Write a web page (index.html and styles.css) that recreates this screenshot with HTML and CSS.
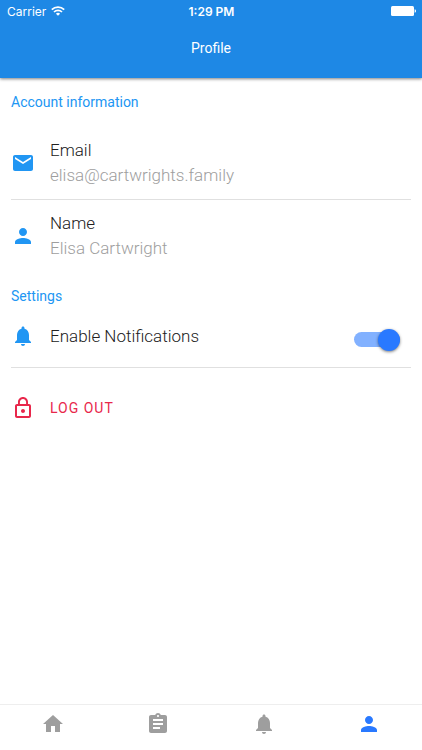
FILE: index.html
```html
<!DOCTYPE html>
<html lang="en">
<head>
  <meta charset="UTF-8">
  <meta name="viewport" content="width=device-width, initial-scale=1">
  <title>Profile</title>
  <link rel="stylesheet" href="styles.css">
</head>
<body>
  <header class="header">
    <div class="status">
      <div class="carrier">
        <span>Carrier</span>
        <svg width="14" height="10" viewBox="0 0 14 10" fill="none" stroke="#fff" stroke-width="1.7">
          <path d="M.8 3.7a8.8 8.8 0 0 1 12.4 0M3 6a5.7 5.7 0 0 1 8 0"/>
          <path d="M7 9.8 4.9 7.7a3 3 0 0 1 4.2 0z" fill="#fff" stroke="none"/>
        </svg>
      </div>
      <time>1:29 PM</time>
      <svg class="battery" width="25" height="10" viewBox="0 0 25 10" fill="#fff">
        <rect width="23" height="10" rx="1.5"/>
        <path d="M23.6 3.2c1.2.2 1.4 1 1.4 1.8s-.2 1.6-1.4 1.8z"/>
      </svg>
    </div>
    <h1>Profile</h1>
  </header>

  <main>
    <section>
      <h2>Account information</h2>
      <div class="row">
        <svg class="icon" viewBox="0 0 24 24"><path d="M20 4H4c-1.1 0-1.99.9-1.99 2L2 18c0 1.1.9 2 2 2h16c1.1 0 2-.9 2-2V6c0-1.1-.9-2-2-2zm0 4l-8 5-8-5V6l8 5 8-5v2z"/></svg>
        <div class="text">
          <p>Email</p>
          <p class="value">elisa@cartwrights.family</p>
        </div>
      </div>
      <div class="row">
        <svg class="icon" viewBox="0 0 24 24"><path d="M12 12c2.21 0 4-1.79 4-4s-1.79-4-4-4-4 1.79-4 4 1.79 4 4 4zm0 2c-2.67 0-8 1.34-8 4v2h16v-2c0-2.66-5.33-4-8-4z"/></svg>
        <div class="text">
          <p>Name</p>
          <p class="value">Elisa Cartwright</p>
        </div>
      </div>
    </section>

    <section>
      <h2>Settings</h2>
      <div class="row setting">
        <svg class="icon" viewBox="0 0 24 24"><path d="M12 22c1.1 0 2-.9 2-2h-4c0 1.1.89 2 2 2zm6-6v-5c0-3.07-1.64-5.64-4.5-6.32V4c0-.83-.67-1.5-1.5-1.5s-1.5.67-1.5 1.5v.68C7.63 5.36 6 7.92 6 11v5l-2 2v1h16v-1l-2-2z"/></svg>
        <label class="text" for="notifications">Enable Notifications</label>
        <input class="switch" type="checkbox" role="switch" id="notifications" checked>
      </div>
    </section>

    <button class="logout" type="button">
      <svg class="icon" viewBox="0 0 24 24"><path d="M12 17c1.1 0 2-.9 2-2s-.9-2-2-2-2 .9-2 2 .9 2 2 2zm6-9h-1V6c0-2.76-2.24-5-5-5S7 3.24 7 6v2H6c-1.1 0-2 .9-2 2v10c0 1.1.9 2 2 2h12c1.1 0 2-.9 2-2V10c0-1.1-.9-2-2-2zM8.9 6c0-1.71 1.39-3.1 3.1-3.1s3.1 1.39 3.1 3.1v2H8.9V6zM18 20H6V10h12v10z"/></svg>
      <span>LOG OUT</span>
    </button>
  </main>

  <nav class="tabs">
    <a href="#home" aria-label="Home">
      <svg class="icon" viewBox="0 0 24 24"><path d="M10 20v-6h4v6h5v-8h3L12 3 2 12h3v8z"/></svg>
    </a>
    <a href="#tasks" aria-label="Tasks">
      <svg class="icon" viewBox="0 0 24 24"><path d="M19 3h-4.18C14.4 1.84 13.3 1 12 1c-1.3 0-2.4.84-2.82 2H5c-1.1 0-2 .9-2 2v14c0 1.1.9 2 2 2h14c1.1 0 2-.9 2-2V5c0-1.1-.9-2-2-2zm-7 0c.55 0 1 .45 1 1s-.45 1-1 1-1-.45-1-1 .45-1 1-1zm2 14H7v-2h7v2zm3-4H7v-2h10v2zm0-4H7V7h10v2z"/></svg>
    </a>
    <a href="#alerts" aria-label="Alerts">
      <svg class="icon" viewBox="0 0 24 24"><path d="M12 22c1.1 0 2-.9 2-2h-4c0 1.1.89 2 2 2zm6-6v-5c0-3.07-1.64-5.64-4.5-6.32V4c0-.83-.67-1.5-1.5-1.5s-1.5.67-1.5 1.5v.68C7.63 5.36 6 7.92 6 11v5l-2 2v1h16v-1l-2-2z"/></svg>
    </a>
    <a class="active" href="#profile" aria-label="Profile">
      <svg class="icon" viewBox="0 0 24 24"><path d="M12 12c2.21 0 4-1.79 4-4s-1.79-4-4-4-4 1.79-4 4 1.79 4 4 4zm0 2c-2.67 0-8 1.34-8 4v2h16v-2c0-2.66-5.33-4-8-4z"/></svg>
    </a>
  </nav>
</body>
</html>
```
FILE: styles.css
```css
* {box-sizing: border-box;}
body {
  margin: 0;
  min-height: 100vh;
  display: flex;
  flex-direction: column;
  background: #fff;
  color: #212121;
  font-family: Roboto, "Liberation Sans", sans-serif;
}
h1, h2, p {margin: 0;}
.header {
  background: #1e88e5;
  color: #fff;
  box-shadow: 0 1px 3px rgba(0, 0, 0, 0.5);
}
.status {
  display: grid;
  grid-template-columns: 1fr auto 1fr;
  align-items: center;
  height: 22px;
  padding: 0 6px 0 7px;
  font-family: Inter, "Liberation Sans", sans-serif;
  font-size: 12px;
}
.status time {font-weight: 600;}
.carrier {
  display: flex;
  align-items: center;
  gap: 5px;
}
.battery {justify-self: end;}
h1 {
  padding: 16px 0 20px;
  font-size: 14px;
  line-height: 20px;
  font-weight: 400;
  text-align: center;
}
main {
  flex: 1;
  padding: 0 11px;
}
h2 {
  font-size: 14px;
  line-height: 48px;
  font-weight: 400;
  color: #2196f3;
}
.icon {
  display: block;
  flex: none;
  width: 24px;
  height: 24px;
  fill: currentColor;
}
.row {
  display: flex;
  align-items: center;
  gap: 15px;
  padding: 12px 0 11px;
  border-bottom: 1px solid #e0e0e0;
}
.row:last-child {
  padding: 11px 0;
  border-bottom: none;
}
.row .icon {color: #2196f3;}
.text {
  flex: 1;
  font-size: 17px;
  line-height: 25px;
  font-weight: 300;
}
.value {color: #9e9e9e;}
.row.setting {
  align-items: flex-start;
  padding: 4px 0 18px;
  border-bottom: 1px solid #e0e0e0;
}
.switch {
  appearance: none;
  flex: none;
  display: flex;
  align-items: center;
  width: 46px;
  height: 15px;
  margin: 8px 11px 0 0;
  border-radius: 8px;
  background: #bdbdbd;
  cursor: pointer;
}
.switch::before {
  content: "";
  width: 22px;
  height: 22px;
  border-radius: 50%;
  background: #fafafa;
  box-shadow: 0 1px 3px rgba(0, 0, 0, 0.5);
}
.switch:checked {
  justify-content: flex-end;
  background: #82b1ff;
}
.switch:checked::before {background: #2979ff;}
.logout {
  display: flex;
  align-items: center;
  gap: 15px;
  margin-top: 16px;
  padding: 12px 0;
  border: none;
  background: none;
  color: #e8274b;
  font: 400 14px/24px Roboto, "Liberation Sans", sans-serif;
  letter-spacing: 1px;
  cursor: pointer;
}
.tabs {
  display: flex;
  height: 46px;
  border-top: 1px solid #eee;
}
.tabs a {
  flex: 1;
  display: flex;
  align-items: center;
  justify-content: center;
  padding-bottom: 7px;
  color: #9e9e9e;
}
.tabs a.active {color: #2979ff;}
```
